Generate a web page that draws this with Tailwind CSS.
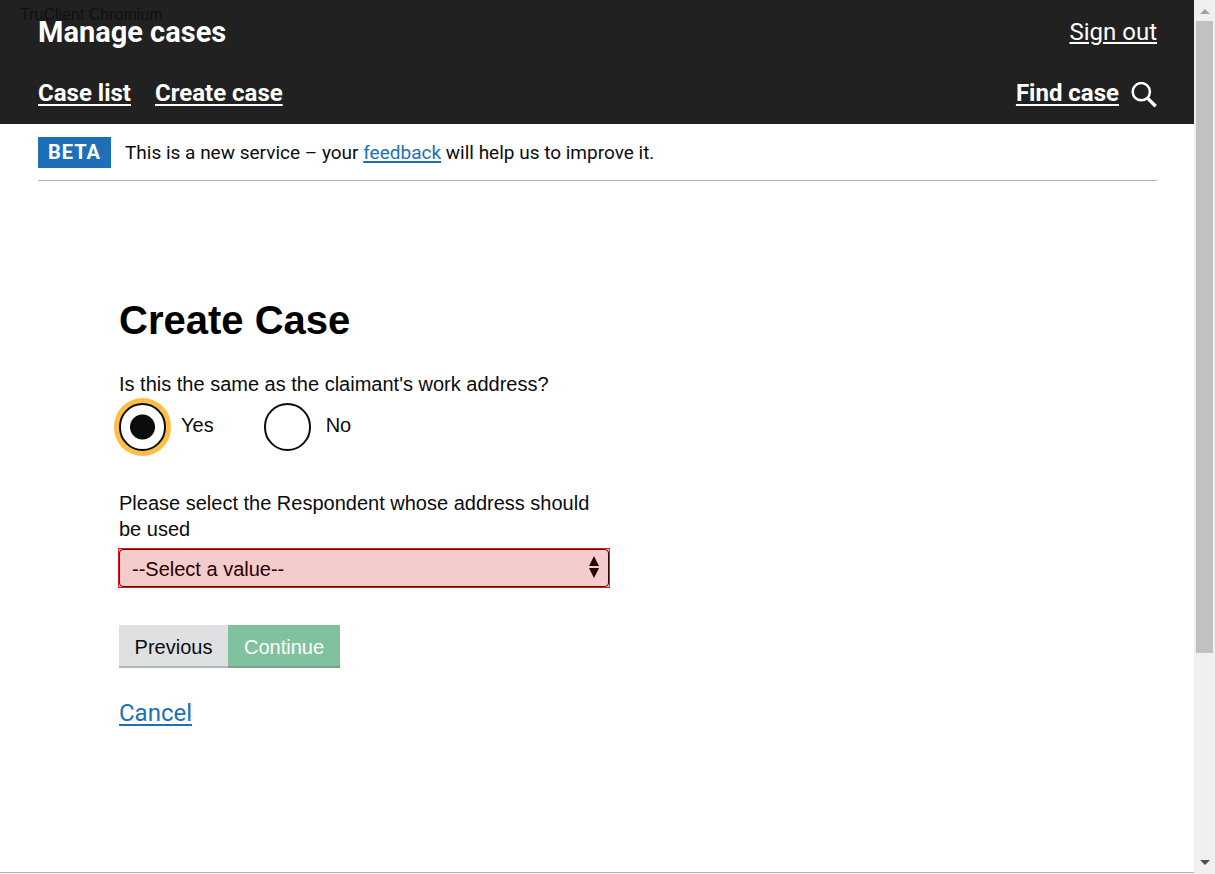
<!DOCTYPE html>
<html lang="en">
<head>
<meta charset="utf-8">
<meta name="viewport" content="width=device-width, initial-scale=1">
<title>Manage cases</title>
<script src="https://cdn.jsdelivr.net/npm/@tailwindcss/browser@4"></script>
</head>
<body class="flex h-screen overflow-hidden bg-white font-['Liberation_Sans',Arial,sans-serif] text-[20px] leading-[26px] text-[#0b0c0c]">
<div class="flex min-w-0 flex-1 flex-col">
  <header class="relative h-[124px] bg-[#212121] pl-[38px] pr-[37px] pt-4 font-[Roboto,sans-serif] text-[24px] leading-8 text-white">
    <span class="absolute left-5 top-[5px] font-['Liberation_Sans',Arial,sans-serif] text-[16px] leading-5 text-[#101010]">TruClient Chromium</span>
    <div class="relative flex justify-between">
      <span class="text-[29px] font-bold">Manage cases</span>
      <a href="#" class="underline decoration-2 underline-offset-2">Sign out</a>
    </div>
    <nav class="mt-[29px] flex items-center gap-6 font-bold">
      <a href="#" class="underline decoration-2 underline-offset-3">Case list</a>
      <a href="#" class="underline decoration-2 underline-offset-3">Create case</a>
      <a href="#" class="ml-auto flex items-center gap-3"><span class="underline decoration-2 underline-offset-3">Find case</span>
        <svg class="mt-1 size-[26px]" viewBox="0 0 26 26" fill="none" stroke="currentColor" aria-hidden="true"><circle cx="10.3" cy="9.7" r="8.6" stroke-width="2.5"/><path d="M16 15.6 24.7 24.3" stroke-width="3.4"/></svg>
      </a>
    </nav>
  </header>
  <div class="ml-[38px] mr-[37px] flex items-center gap-[14px] border-b border-[#b1b4b6] pb-3 pt-[13px] font-[Roboto,sans-serif]">
    <strong class="bg-[#1d70b8] px-[10px] text-[20px] leading-[31px] tracking-[1px] text-white">BETA</strong>
    <p class="pt-px text-[19px]">This is a new service – your <a href="#" class="text-[#1d70b8] underline decoration-2 underline-offset-2">feedback</a> will help us to improve it.</p>
  </div>
  <main class="flex-1 px-[119px] pt-[114px]">
    <h1 class="text-[40px] font-bold leading-[50px] text-black">Create Case</h1>
    <form>
      <fieldset class="mt-[26px]">
        <legend>Is this the same as the claimant's work address?</legend>
        <div class="mt-[6px] flex gap-[50px]">
          <label class="flex gap-[15px]"><input type="radio" name="same" checked class="h-12 w-[47px] appearance-none rounded-full border-2 border-[#0b0c0c] bg-white ring-[#ffbf47] checked:bg-[radial-gradient(circle,#0b0c0c_12px,transparent_13px)] checked:ring-[5px]"><span class="pt-[9px]">Yes</span></label>
          <label class="flex gap-[15px]"><input type="radio" name="same" class="h-12 w-[47px] appearance-none rounded-full border-2 border-[#0b0c0c] bg-white"><span class="pt-[9px]">No</span></label>
        </div>
      </fieldset>
      <label for="respondent" class="mt-[39px] block max-w-[490px]">Please select the Respondent whose address should be used</label>
      <div class="relative -mx-px mt-[6px] max-w-[492px] border border-[#ff1515] bg-[#f4cccc]">
        <select id="respondent" class="block h-[38px] w-full appearance-none rounded-[4px] border border-[#380303] bg-[#f4cccc] px-3 pt-[2px] text-[20px] text-[#2b0000]"><option>--Select a value--</option></select>
        <svg class="pointer-events-none absolute right-[10px] top-[7px] h-[22px] w-[10px]" viewBox="0 0 10 22" fill="#2b0000" aria-hidden="true"><path d="M5 0 10 10H0ZM0 12h10L5 22Z"/></svg>
      </div>
      <div class="mt-[37px] flex">
        <button type="button" class="h-[43px] w-[109px] border-b-2 border-[#b2b7bc] bg-[#dee0e2] pt-[2px]">Previous</button>
        <button type="submit" class="h-[43px] w-[112px] border-b-2 border-[#829b8d] bg-[#80c29e] pt-[2px] text-white">Continue</button>
      </div>
      <a href="#" class="mt-[29px] inline-block font-[Roboto,sans-serif] text-[24px] leading-8 text-[#1d70b8] underline decoration-2 underline-offset-3">Cancel</a>
    </form>
  </main>
  <footer class="h-[2px] border-t border-[#b1b4b6] bg-[#f3f2f1]"></footer>
</div>
<div class="flex w-[21px] shrink-0 flex-col items-center bg-[#f0f0f0]" aria-hidden="true">
  <svg class="h-[21px] w-[10px] shrink-0" viewBox="0 0 10 21" fill="#a0a0a0"><path d="M5 9 10 14H0Z"/></svg>
  <div class="min-h-0 w-[17px] flex-1"><div class="h-[76%] bg-[#c1c1c1]"></div></div>
  <svg class="h-[21px] w-[10px] shrink-0" viewBox="0 0 10 21" fill="#505050"><path d="M0 7h10L5 12Z"/></svg>
</div>
</body>
</html>
